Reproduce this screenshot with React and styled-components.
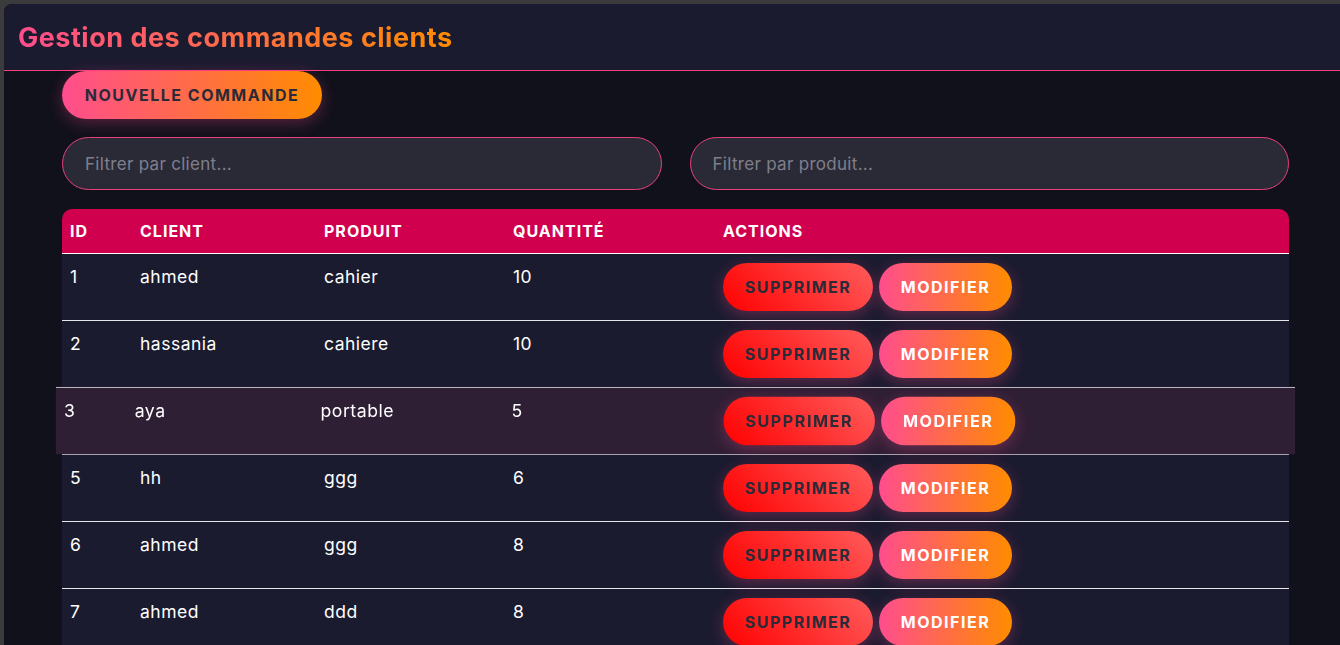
import React from "react";
import styled, { createGlobalStyle } from "styled-components";

const GlobalStyle = createGlobalStyle`
  html, body {
    margin: 0;
    padding: 0;
    background: #3b3b3d;
    font-family: "Inter", "Open Sans", sans-serif;
    overflow: hidden;
  }
`;

const Frame = styled.div`
  margin: 4px 0 0 4px;
  min-height: 641px;
  background: #11111b;
  border-top-left-radius: 8px;
  overflow: hidden;
`;

const Header = styled.header`
  height: 66px;
  background: #1b1b2f;
  border-bottom: 1px solid #ff3d7f;
  display: flex;
  align-items: center;
  padding-left: 14px;
`;

const Title = styled.h1`
  margin: 0;
  font-size: 27px;
  font-weight: 700;
  letter-spacing: 0.5px;
  background: linear-gradient(90deg, #ff4d8d, #ff8c00);
  -webkit-background-clip: text;
  background-clip: text;
  color: transparent;
`;

const Main = styled.main`
  padding: 0 51px 0 58px;
  display: flex;
  flex-direction: column;
`;

const PillButton = styled.button`
  border: none;
  border-radius: 24px;
  height: 48px;
  width: ${(p) => p.$w || "auto"};
  padding: 0;
  font-family: inherit;
  font-size: 16px;
  font-weight: 700;
  letter-spacing: 1.5px;
  text-transform: uppercase;
  cursor: pointer;
  color: ${(p) => (p.$light ? "#ffffff" : "#2a2a38")};
  background: ${(p) =>
    p.$danger
      ? "linear-gradient(45deg, #ff0000, #ff5c5c)"
      : "linear-gradient(90deg, #ff4d8d, #ff8c00)"};
  box-shadow: 0 4px 15px rgba(255, 77, 141, 0.3);
`;

const NewButton = styled(PillButton)`
  align-self: flex-start;
`;

const Filters = styled.div`
  display: grid;
  grid-template-columns: 1fr 1fr;
  gap: 28px;
  margin-top: 18px;
`;

const Filter = styled.input`
  height: 53px;
  box-sizing: border-box;
  border: 1px solid #e8407e;
  border-radius: 27px;
  background: #2a2a36;
  padding: 0 22px;
  font-family: inherit;
  font-size: 17px;
  letter-spacing: 0.3px;
  color: #fff;
  outline: none;
  &::placeholder {
    color: #7f7f8c;
  }
`;

const Table = styled.table`
  margin-top: 19px;
  width: 100%;
  border-collapse: collapse;
  table-layout: fixed;
`;

const HeadRow = styled.tr`
  background: #d1004f;
  height: 44px;
  th:first-child {
    border-top-left-radius: 10px;
  }
  th:last-child {
    border-top-right-radius: 10px;
  }
`;

const Th = styled.th`
  text-align: left;
  padding: 0 8px;
  color: #fff;
  font-size: 16px;
  font-weight: 700;
  letter-spacing: 1px;
  border-bottom: 1px solid #ffffff;
  width: ${(p) => p.$w || "auto"};
`;

const Row = styled.tr`
  height: 67px;
  border-bottom: 1px solid #e6e6ea;
  background: #1b1b2f;
  transform: ${(p) => (p.$hover ? "scale(1.01)" : "none")};
  box-shadow: ${(p) =>
    p.$hover
      ? "inset 0 1px 0 #e6e6ea, inset 0 0 0 200px #2f1f35"
      : "none"};
`;

const Td = styled.td`
  vertical-align: top;
  padding: 13px 8px 0;
  color: #ffffff;
  font-size: 17.5px;
  letter-spacing: 0.5px;
  line-height: 20px;
`;

const ActionCell = styled.td`
  vertical-align: middle;
  padding: 0 8px;
`;

const Actions = styled.div`
  display: flex;
  gap: 6px;
`;

const orders = [
  { id: 1, client: "ahmed", produit: "cahier", qte: 10 },
  { id: 2, client: "hassania", produit: "cahiere", qte: 10 },
  { id: 3, client: "aya", produit: "portable", qte: 5, hover: true },
  { id: 5, client: "hh", produit: "ggg", qte: 6 },
  { id: 6, client: "ahmed", produit: "ggg", qte: 8 },
  { id: 7, client: "ahmed", produit: "ddd", qte: 8 },
];

const App = () => {
  return (
    <>
      <GlobalStyle />
      <Frame>
        <Header>
          <Title>Gestion des commandes clients</Title>
        </Header>
        <Main>
          <NewButton $w="260px">Nouvelle commande</NewButton>
          <Filters>
            <Filter placeholder="Filtrer par client..." />
            <Filter placeholder="Filtrer par produit..." />
          </Filters>
          <Table>
            <thead>
              <HeadRow>
                <Th $w="54px">ID</Th>
                <Th $w="168px">CLIENT</Th>
                <Th $w="173px">PRODUIT</Th>
                <Th $w="194px">QUANTITÉ</Th>
                <Th>ACTIONS</Th>
              </HeadRow>
            </thead>
            <tbody>
              {orders.map((o) => (
                <Row key={o.id} $hover={o.hover}>
                  <Td>{o.id}</Td>
                  <Td>{o.client}</Td>
                  <Td>{o.produit}</Td>
                  <Td>{o.qte}</Td>
                  <ActionCell>
                    <Actions>
                      <PillButton $danger $w="150px">
                        Supprimer
                      </PillButton>
                      <PillButton $light $w="133px">
                        Modifier
                      </PillButton>
                    </Actions>
                  </ActionCell>
                </Row>
              ))}
            </tbody>
          </Table>
        </Main>
      </Frame>
    </>
  );
};

export default App;
